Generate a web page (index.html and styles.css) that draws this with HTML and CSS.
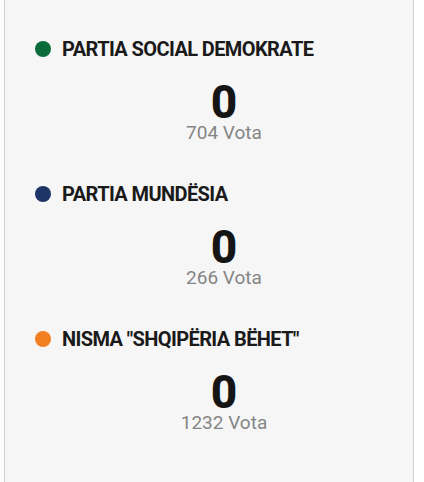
FILE: index.html
```html
<!DOCTYPE html>
<html lang="sq">
<head>
<meta charset="utf-8">
<link rel="stylesheet" href="styles.css">
</head>
<body>
<div class="card">
  <div class="party">
    <div class="party-head"><span class="dot dot-green"></span><span class="party-name">PARTIA SOCIAL DEMOKRATE</span></div>
    <div class="seats">0</div>
    <div class="votes">704 Vota</div>
  </div>
  <div class="party">
    <div class="party-head"><span class="dot dot-navy"></span><span class="party-name">PARTIA MUNDËSIA</span></div>
    <div class="seats">0</div>
    <div class="votes">266 Vota</div>
  </div>
  <div class="party">
    <div class="party-head"><span class="dot dot-orange"></span><span class="party-name">NISMA "SHQIPËRIA BËHET"</span></div>
    <div class="seats">0</div>
    <div class="votes">1232 Vota</div>
  </div>
</div>
</body>
</html>
```

FILE: styles.css
```css
html, body {
  margin: 0;
  padding: 0;
  background: #ffffff;
}
body {
  font-family: Roboto, "Noto Sans", Arial, sans-serif;
  color: #1a1a1a;
}
.card {
  margin-left: 4px;
  width: 410px;
  min-height: 482px;
  box-sizing: border-box;
  background: #f6f6f6;
  border-left: 1px solid #d0d0d0;
  border-right: 1px solid #d0d0d0;
  padding: 37px 0 0 30px;
}
.party {
  margin-bottom: 38px;
}
.party-head {
  display: flex;
  align-items: center;
  height: 24px;
}
.dot {
  width: 16px;
  height: 16px;
  border-radius: 50%;
  flex: none;
  margin-right: 11px;
}
.dot-green { background: #0a6b3b; }
.dot-navy { background: #1c3566; }
.dot-orange { background: #f27f22; }
.party-name {
  font-size: 20px;
  font-weight: 700;
  letter-spacing: -0.6px;
  line-height: 24px;
  color: #1a1a1a;
}
.seats {
  margin-top: 21px;
  text-align: center;
  font-size: 46px;
  font-weight: 800;
  line-height: 40px;
  color: #151515;
}
.votes {
  text-align: center;
  font-size: 19px;
  line-height: 22px;
  color: #858585;
}
```
